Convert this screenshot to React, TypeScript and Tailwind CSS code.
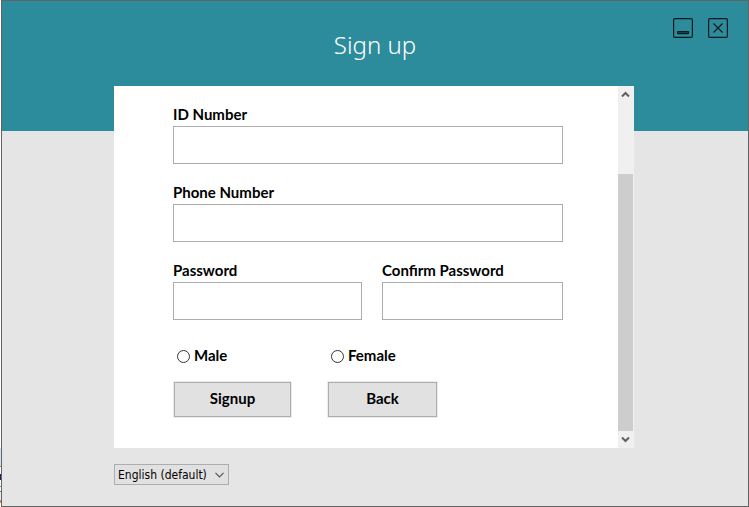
import { useId } from "react";

function Field({ label, type = "text" }: { label: string; type?: string }) {
  const id = useId();
  return (
    <div className="flex min-w-0 flex-col">
      <label htmlFor={id} className="pb-1 text-[15px] leading-4 font-bold">
        {label}
      </label>
      <input
        id={id}
        type={type}
        className="h-[38px] w-full border border-[#abadb3] bg-white px-2 text-[15px] outline-none"
      />
    </div>
  );
}

function Gender({ label }: { label: string }) {
  return (
    <label className="flex items-center gap-1 pl-1 text-[15px] leading-5 font-bold">
      <input
        type="radio"
        name="gender"
        value={label}
        className="mt-0.5 size-[13px] appearance-none rounded-full border border-[#333] bg-white checked:border-4"
      />
      {label}
    </label>
  );
}

function Chevron({ up = false }: { up?: boolean }) {
  return (
    <svg width="9" height="7" viewBox="0 0 9 7" fill="none" stroke="#606060" strokeWidth="2">
      <path d={up ? "M1 5.5 4.5 2 8 5.5" : "M1 1.5 4.5 5 8 1.5"} />
    </svg>
  );
}

function ScrollBar() {
  return (
    <div className="flex w-4 shrink-0 flex-col bg-[#f0f0f0] pr-px">
      <button type="button" aria-label="Scroll up" className="flex h-[17px] items-center justify-center">
        <Chevron up />
      </button>
      <div className="flex grow flex-col justify-end">
        <div className="h-[78.4%] bg-[#cdcdcd]" />
      </div>
      <button type="button" aria-label="Scroll down" className="flex h-[17px] items-center justify-center">
        <Chevron />
      </button>
    </div>
  );
}

export default function App() {
  return (
    <div className="flex min-h-screen bg-white font-['Lato',sans-serif] text-black">
      <div className="flex w-px shrink-0 flex-col justify-end pb-1">
        <div className="h-[18px] bg-[#cfdff5]" />
        <div className="h-px bg-[#888]" />
        <div className="h-[7px] bg-white" />
        <div className="h-[6px] bg-[#2a1a5e]" />
        <div className="h-[6px] bg-white" />
        <div className="h-px bg-[#888]" />
        <div className="h-1 bg-white" />
        <div className="h-px bg-[#1e88c0]" />
        <div className="h-2 bg-[#e0eefa]" />
        <div className="h-[3px] bg-[#e08a1e]" />
      </div>
      <div className="flex min-w-0 grow flex-col border border-[#646464] bg-[#e5e5e5]">
        <header className="grid h-[130px] grid-cols-[1fr_auto_1fr] items-start bg-[#2d8c9c] px-5 pt-4">
          <h1 className="col-start-2 pt-3 font-['Noto_Sans',sans-serif] text-[24px] leading-8 font-light text-white">
            Sign up
          </h1>
          <div className="flex justify-end gap-[15px]">
            <button type="button" aria-label="Minimize" className="mt-px">
              <svg width="20" height="20" viewBox="0 0 20 20" fill="none" stroke="#061a1e">
                <rect x=".6" y=".6" width="18.8" height="18.8" rx="1.5" strokeWidth="1.2" />
                <rect x="4.6" y="13.6" width="11" height="2" rx=".5" fill="#17505a" strokeWidth="1.2" />
              </svg>
            </button>
            <button type="button" aria-label="Close" className="mt-px">
              <svg width="20" height="20" viewBox="0 0 20 20" fill="none" stroke="#061a1e">
                <rect x=".6" y=".6" width="18.8" height="18.8" rx="1.5" strokeWidth="1.2" />
                <path d="M5.5 5.5l9 9M14.5 5.5l-9 9" strokeWidth="1.2" />
              </svg>
            </button>
          </div>
        </header>

        <main className="mx-auto -mt-[45px] w-full max-w-[522px] pr-0.5">
          <div className="flex bg-white">
            <form className="flex min-w-0 grow flex-col gap-5 pt-5 pr-[55px] pb-[30px] pl-[59px]">
              <Field label="ID Number" />
              <Field label="Phone Number" />
              <div className="grid grid-cols-[189fr_181fr] gap-5">
                <Field label="Password" type="password" />
                <Field label="Confirm Password" type="password" />
              </div>
              <div className="grid grid-cols-[154px_1fr] gap-y-4 pt-[5px]">
                <Gender label="Male" />
                <Gender label="Female" />
                <button
                  type="button"
                  className="m-px h-[35px] w-[117px] border border-[#adadad] bg-[#e1e1e1] pb-0.5 text-[15px] font-bold shadow-[0_0_0_1px_#ececec]"
                >
                  Signup
                </button>
                <button
                  type="button"
                  className="m-px h-[35px] w-[109px] border border-[#adadad] bg-[#e1e1e1] pb-0.5 text-[15px] font-bold shadow-[0_0_0_1px_#ececec]"
                >
                  Back
                </button>
              </div>
            </form>
            <ScrollBar />
          </div>

          <div className="mt-4 grid w-[115px]">
            <select
              aria-label="Language"
              className="col-start-1 row-start-1 h-[21px] appearance-none border border-[#abadb3] bg-[#e1e1e1] pl-[3px] font-['DejaVu_Sans_Condensed','DejaVu_Sans',sans-serif] text-[12px]"
            >
              <option>English (default)</option>
            </select>
            <svg
              className="pointer-events-none col-start-1 row-start-1 mr-[5px] self-center justify-self-end"
              width="9"
              height="6"
              viewBox="0 0 9 6"
              fill="none"
              stroke="#555"
              strokeWidth="1.2"
            >
              <path d="M.5.8l4 4 4-4" />
            </svg>
          </div>
        </main>
      </div>
    </div>
  );
}
